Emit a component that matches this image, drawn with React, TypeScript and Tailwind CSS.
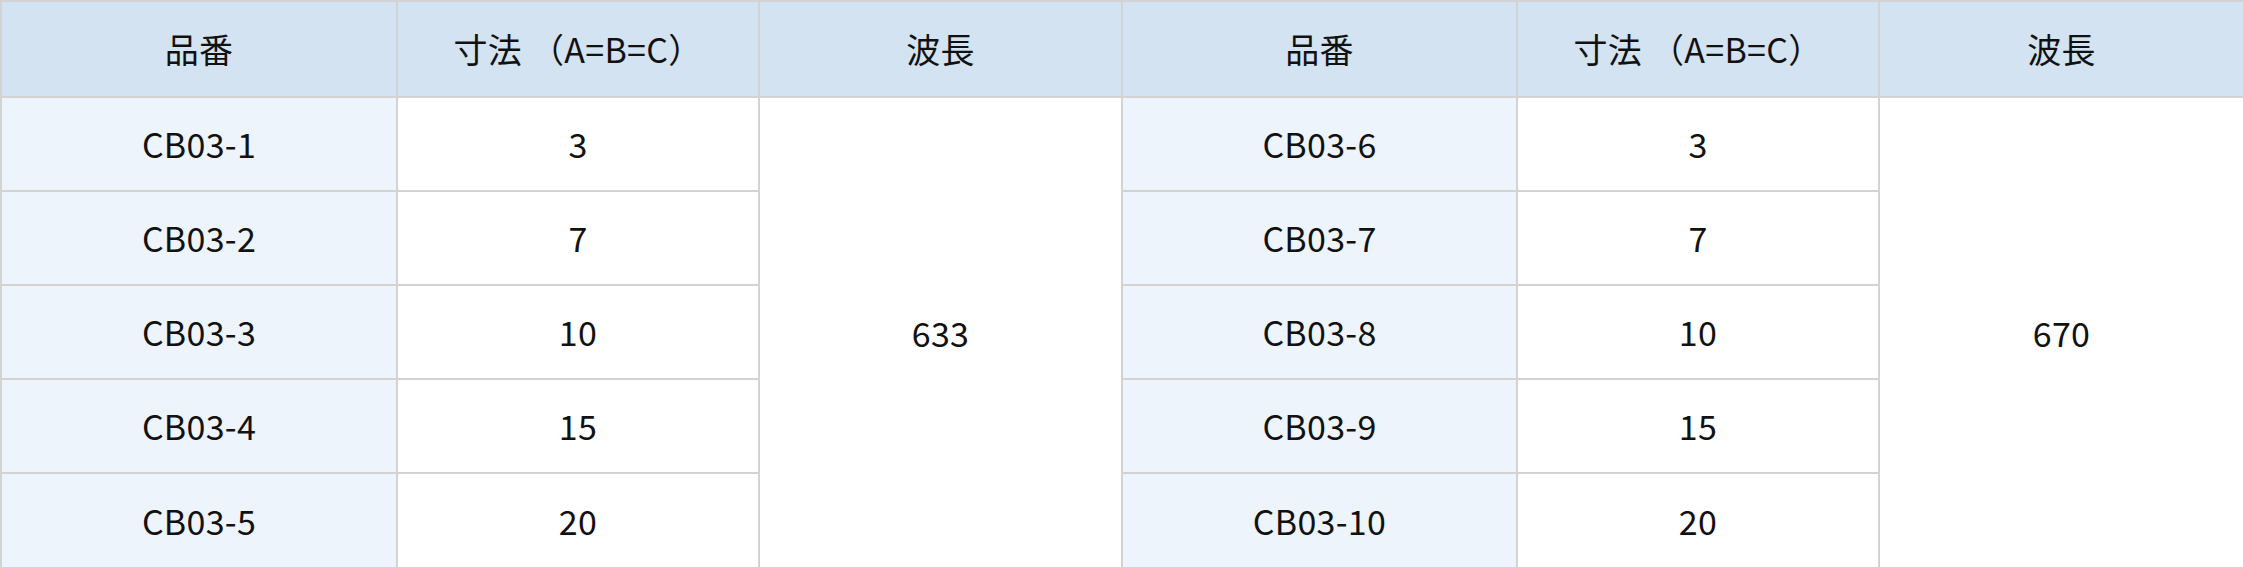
import * as React from "react";

interface Group {
  wave: string;
  rows: { code: string; size: string }[];
}

const GROUPS: Group[] = [
  {
    wave: "633",
    rows: [
      { code: "CB03-1", size: "3" },
      { code: "CB03-2", size: "7" },
      { code: "CB03-3", size: "10" },
      { code: "CB03-4", size: "15" },
      { code: "CB03-5", size: "20" },
    ],
  },
  {
    wave: "670",
    rows: [
      { code: "CB03-6", size: "3" },
      { code: "CB03-7", size: "7" },
      { code: "CB03-8", size: "10" },
      { code: "CB03-9", size: "15" },
      { code: "CB03-10", size: "20" },
    ],
  },
];

const cell = "border-2 border-[#d3d3d3] text-center align-middle";

export default function App() {
  const rowHeights = ["h-[94px]", "h-[94px]", "h-[94px]", "h-[94px]", "h-[95px]"];

  return (
    <div className="bg-white" style={{ fontFamily: '"Noto Sans CJK JP", "Noto Sans", sans-serif' }}>
      <table className="w-[2243px] table-fixed border-collapse text-[34px] leading-none tracking-[0.3px] text-[#111]">
        <colgroup>
          <col className="w-[396px]" />
          <col className="w-[362px]" />
          <col className="w-[363px]" />
          <col className="w-[395px]" />
          <col className="w-[362px]" />
          <col className="w-[365px]" />
        </colgroup>
        <thead>
          <tr className="h-[96px] bg-[#d4e3f2]">
            {GROUPS.map((g) => (
              <React.Fragment key={g.wave}>
                <th className={`${cell} font-normal`}>品番</th>
                <th className={`${cell} font-normal`}>寸法 （A=B=C）</th>
                <th className={`${cell} font-normal`}>波長</th>
              </React.Fragment>
            ))}
          </tr>
        </thead>
        <tbody>
          {GROUPS[0].rows.map((_, i) => (
            <tr key={i} className={rowHeights[i]}>
              {GROUPS.map((g) => (
                <React.Fragment key={g.wave}>
                  <td className={`${cell} bg-[#edf4fb]`}>{g.rows[i].code}</td>
                  <td className={`${cell} bg-white`}>{g.rows[i].size}</td>
                  {i === 0 && (
                    <td rowSpan={5} className={`${cell} bg-white`}>
                      {g.wave}
                    </td>
                  )}
                </React.Fragment>
              ))}
            </tr>
          ))}
        </tbody>
      </table>
    </div>
  );
}
